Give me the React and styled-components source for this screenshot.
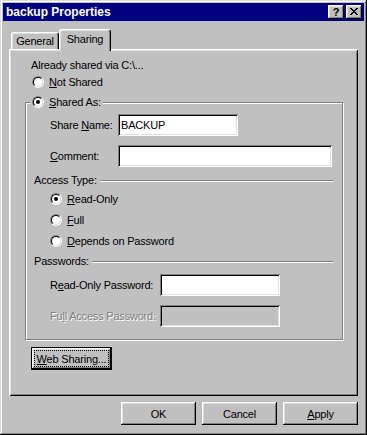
import React from 'react';
import styled, { createGlobalStyle } from 'styled-components';

const GlobalStyle = createGlobalStyle`
  html, body { margin: 0; padding: 0; background: #c0c0c0; }
  body {
    font-family: "Liberation Sans", Arial, sans-serif;
    font-size: 11px;
    letter-spacing: -0.2px;
    color: #000;
    white-space: nowrap;
  }
  * { box-sizing: border-box; }
`;

const raised = `
  box-shadow: inset -1px -1px #000, inset 1px 1px #fff, inset -2px -2px #808080, inset 2px 2px #dfdfdf;
`;

const Window = styled.div`
  width: 367px;
  height: 435px;
  background: #c0c0c0;
  padding: 3px;
  box-shadow: inset -1px -1px #000, inset 1px 1px #dfdfdf, inset -2px -2px #808080, inset 2px 2px #fff;
  display: flex;
  flex-direction: column;
`;

const TitleBar = styled.div`
  height: 18px;
  background: #000080;
  color: #fff;
  display: flex;
  align-items: center;
  justify-content: space-between;
  padding: 0 2px 0 3px;
`;

const TitleText = styled.span`
  font-weight: bold;
  font-size: 12px;
  letter-spacing: 0;
  line-height: 18px;
`;

const TitleButtons = styled.div`
  display: flex;
  gap: 2px;
`;

const TitleButton = styled.div`
  width: 16px;
  height: 14px;
  background: #c0c0c0;
  ${raised}
  display: flex;
  align-items: center;
  justify-content: center;
  color: #000;
  font-weight: bold;
  font-size: 11px;
  letter-spacing: 0;
  line-height: 14px;
  padding-bottom: 1px;
`;

const Body = styled.div`
  display: flex;
  flex-direction: column;
  padding: 8px 6px 0 6px;
`;

const TabRow = styled.div`
  display: flex;
  align-items: flex-end;
  height: 20px;
  padding-left: 2px;
`;

const Tab = styled.div`
  width: ${p => p.$w}px;
  height: ${p => (p.$active ? 22 : 17)}px;
  margin-bottom: ${p => (p.$active ? -2 : 0)}px;
  position: relative;
  z-index: ${p => (p.$active ? 2 : 1)};
  background: #c0c0c0;
  border-top: 1px solid #fff;
  border-left: 1px solid #fff;
  border-right: 1px solid #000;
  border-radius: 3px 3px 0 0;
  box-shadow: inset -1px 0 #808080, inset 1px 1px #dfdfdf;
  display: flex;
  justify-content: center;
  padding-top: ${p => (p.$active ? 3 : 2)}px;
  line-height: 13px;
`;

const Panel = styled.div`
  height: 347px;
  background: #c0c0c0;
  box-shadow: inset 1px 1px #fff, inset -1px -1px #000, inset 2px 2px #dfdfdf, inset -2px -2px #808080;
  display: flex;
  flex-direction: column;
  padding: 9px 15px 0 16px;
`;

const InfoText = styled.div`
  height: 14px;
  line-height: 14px;
  margin-left: 6px;
`;

const RadioRow = styled.div`
  display: flex;
  align-items: center;
  gap: 5px;
  height: 16px;
  margin-top: ${p => p.$mt || 0}px;
  margin-left: ${p => p.$ml || 0}px;
`;

const RadioOuter = styled.span`
  flex: none;
  width: 12px;
  height: 12px;
  border-radius: 50%;
  border: 1px solid;
  border-color: #808080 #fff #fff #808080;
  display: flex;
`;

const RadioInner = styled.span`
  flex: 1;
  border-radius: 50%;
  border: 1px solid;
  border-color: #000 #dfdfdf #dfdfdf #000;
  background: #fff;
  display: flex;
  align-items: center;
  justify-content: center;
`;

const RadioDot = styled.span`
  width: 4px;
  height: 4px;
  border-radius: 50%;
  background: #000;
`;

const Accel = styled.span`
  text-decoration: underline;
  text-underline-offset: 1px;
`;

const GroupBox = styled.div`
  margin-top: 12px;
  height: 238px;
  border: 1px solid #808080;
  box-shadow: 1px 1px 0 #fff, inset 1px 1px 0 #fff;
  padding-left: 8px;
  display: flex;
  flex-direction: column;
`;

const Legend = styled.div`
  align-self: flex-start;
  display: flex;
  align-items: center;
  gap: 5px;
  height: 16px;
  margin: -9px 0 0 -4px;
  padding: 0 2px;
  background: #c0c0c0;
`;

const FieldRow = styled.div`
  display: flex;
  align-items: center;
  height: 22px;
  margin-top: ${p => p.$mt}px;
  margin-left: 16px;
`;

const Label = styled.span`
  width: ${p => p.$w}px;
  flex: none;
  color: ${p => (p.$disabled ? '#808080' : '#000')};
  text-shadow: ${p => (p.$disabled ? '1px 1px 0 #fff' : 'none')};
`;

const Edit = styled.div`
  width: ${p => p.$w}px;
  height: 22px;
  background: ${p => (p.$disabled ? '#c0c0c0' : '#fff')};
  box-shadow: inset 1px 1px #808080, inset -1px -1px #fff, inset 2px 2px #000, inset -2px -2px #dfdfdf;
  display: flex;
  align-items: center;
  padding: 0 3px;
`;

const Separator = styled.div`
  display: flex;
  align-items: center;
  height: 14px;
  margin-top: ${p => p.$mt}px;
`;

const SepLine = styled.div`
  flex: 1;
  height: 2px;
  margin: 1px 9px 0 3px;
  border-top: 1px solid #808080;
  border-bottom: 1px solid #fff;
`;

const Button = styled.button`
  width: ${p => p.$w}px;
  height: 23px;
  background: #c0c0c0;
  border: none;
  ${raised}
  font: inherit;
  letter-spacing: inherit;
  color: #000;
  padding: 0;
  display: flex;
  align-items: center;
  justify-content: center;
`;

const DefaultButton = styled.button`
  width: ${p => p.$w}px;
  height: 23px;
  margin-top: 7px;
  margin-left: 6px;
  background: #c0c0c0;
  border: 1px solid #000;
  ${raised}
  font: inherit;
  letter-spacing: inherit;
  color: #000;
  padding: 2px;
  display: flex;
`;

const FocusRect = styled.span`
  flex: 1;
  border: 1px dotted #000;
  display: flex;
  align-items: center;
  justify-content: center;
`;

const Footer = styled.div`
  display: flex;
  justify-content: flex-end;
  gap: 6px;
  margin-top: 6px;
`;

const Radio = ({ checked }) => (
  <RadioOuter>
    <RadioInner>{checked && <RadioDot />}</RadioInner>
  </RadioOuter>
);

const CloseGlyph = () => (
  <svg width="8" height="7" viewBox="0 0 8 7" shapeRendering="crispEdges">
    <path
      fill="#000"
      d="M0 0h2v1H0zM6 0h2v1H6zM1 1h2v1H1zM5 1h2v1H5zM2 2h4v1H2zM3 3h2v1H3zM2 4h4v1H2zM1 5h2v1H1zM5 5h2v1H5zM0 6h2v1H0zM6 6h2v1H6z"
    />
  </svg>
);

export default function App() {
  return (
    <>
      <GlobalStyle />
      <Window>
        <TitleBar>
          <TitleText>backup Properties</TitleText>
          <TitleButtons>
            <TitleButton>?</TitleButton>
            <TitleButton><CloseGlyph /></TitleButton>
          </TitleButtons>
        </TitleBar>
        <Body>
          <TabRow>
            <Tab $w={48}>General</Tab>
            <Tab $w={52} $active>Sharing</Tab>
          </TabRow>
          <Panel>
            <InfoText>Already shared via C:\...</InfoText>
            <RadioRow $mt={2} $ml={7}>
              <Radio />
              <span><Accel>N</Accel>ot Shared</span>
            </RadioRow>
            <GroupBox>
              <Legend>
                <Radio checked />
                <span><Accel>S</Accel>hared As:</span>
              </Legend>
              <FieldRow $mt={4}>
                <Label $w={68}>Share <Accel>N</Accel>ame:</Label>
                <Edit $w={120}>BACKUP</Edit>
              </FieldRow>
              <FieldRow $mt={9}>
                <Label $w={68}><Accel>C</Accel>omment:</Label>
                <Edit $w={214} />
              </FieldRow>
              <Separator $mt={6}>
                <span>Access Type:</span>
                <SepLine />
              </Separator>
              <RadioRow $mt={4} $ml={16}>
                <Radio checked />
                <span><Accel>R</Accel>ead-Only</span>
              </RadioRow>
              <RadioRow $mt={5} $ml={16}>
                <Radio />
                <span><Accel>F</Accel>ull</span>
              </RadioRow>
              <RadioRow $mt={5} $ml={16}>
                <Radio />
                <span><Accel>D</Accel>epends on Password</span>
              </RadioRow>
              <Separator $mt={5}>
                <span>Passwords:</span>
                <SepLine />
              </Separator>
              <FieldRow $mt={6}>
                <Label $w={110}>R<Accel>e</Accel>ad-Only Password:</Label>
                <Edit $w={120} />
              </FieldRow>
              <FieldRow $mt={9}>
                <Label $w={110} $disabled>Fu<Accel>l</Accel>l Access Password:</Label>
                <Edit $w={120} $disabled />
              </FieldRow>
            </GroupBox>
            <DefaultButton $w={81}>
              <FocusRect><span><Accel>W</Accel>eb Sharing...</span></FocusRect>
            </DefaultButton>
          </Panel>
          <Footer>
            <Button $w={75}>OK</Button>
            <Button $w={75}>Cancel</Button>
            <Button $w={75}><span><Accel>A</Accel>pply</span></Button>
          </Footer>
        </Body>
      </Window>
    </>
  );
}
